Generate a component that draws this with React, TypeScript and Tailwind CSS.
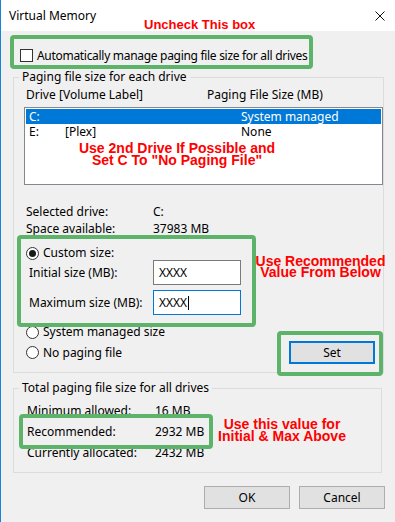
import React from "react";

const font = { fontFamily: '"Noto Sans", "Liberation Sans", sans-serif' };
const redFont = { fontFamily: '"Liberation Sans", Arial, sans-serif' };

const Radio: React.FC<{ checked?: boolean; label: string }> = ({ checked, label }) => (
  <div className="flex items-center gap-[4px]">
    <span className="w-[13px] h-[13px] rounded-full border border-[#333333] bg-white flex items-center justify-center">
      {checked && <span className="w-[7px] h-[7px] rounded-full bg-[#1a1a1a]" />}
    </span>
    <span>{label}</span>
  </div>
);

const SizeInput: React.FC<{ value: string; focused?: boolean }> = ({ value, focused }) => (
  <div
    className={`w-[88px] h-[25px] bg-white border flex items-center pl-[5px] ${
      focused ? "border-[#0078d7]" : "border-[#7a7a7a]"
    }`}
  >
    <span>{value}</span>
    {focused && <span className="w-[1px] h-[14px] bg-black ml-[1px]" />}
  </div>
);

export default function App() {
  return (
    <div
      className="relative w-[395px] h-[522px] bg-[#f0f0f0] overflow-hidden text-[12px] text-black shadow-[inset_1px_0_0_#1883d7]"
      style={font}
    >
      {/* title bar */}
      <div className="h-[31px] bg-white flex items-center justify-between pl-[9px] pr-[10px] shadow-[inset_1px_0_0_#1883d7]">
        <span>Virtual Memory</span>
        <svg width="10" height="10" viewBox="0 0 10 10" className="block">
          <path d="M0.5 0.5 L9.5 9.5 M9.5 0.5 L0.5 9.5" stroke="#111" strokeWidth="1" />
        </svg>
      </div>

      {/* auto manage checkbox */}
      <div className="mt-[18px] pl-[20px] flex items-center gap-[4px] h-[13px]">
        <span className="w-[13px] h-[13px] border border-[#333333] bg-white shrink-0" />
        <span className="tracking-[-0.3px] whitespace-nowrap">Automatically manage paging file size for all drives</span>
      </div>

      {/* paging file per drive */}
      <fieldset className="mt-[7px] ml-[13px] w-[369px] border border-[#dcdcdc] pb-[8px]">
        <legend className="ml-[5px] px-[3px] leading-[16px]">Paging file size for each drive</legend>

        <div className="mt-[2px] h-[16px] leading-[16px] flex pl-[12px]">
          <span className="w-[33px]">Drive</span>
          <span className="w-[148px]">[Volume Label]</span>
          <span>Paging File Size (MB)</span>
        </div>

        <div className="mt-[4px] ml-[10px] w-[359px] h-[78px] border border-[#828790] bg-white p-[1px]">
          <div className="h-[15px] leading-[15px] flex pl-[3px] bg-[#0078d7] text-white">
            <span className="w-[36px]">C:</span>
            <span className="w-[176px]"></span>
            <span>System managed</span>
          </div>
          <div className="h-[15px] leading-[15px] flex pl-[3px]">
            <span className="w-[36px]">E:</span>
            <span className="w-[176px]">[Plex]</span>
            <span>None</span>
          </div>
        </div>

        <div className="mt-[18px] pl-[12px] leading-[17px]">
          <div className="flex">
            <span className="w-[127px]">Selected drive:</span>
            <span>C:</span>
          </div>
          <div className="flex">
            <span className="w-[127px]">Space available:</span>
            <span>37983 MB</span>
          </div>
        </div>

        <div className="mt-[9px] pl-[12px] h-[14px] flex items-center">
          <Radio checked label="Custom size:" />
        </div>

        <div className="pl-[15px] flex items-center h-[25px]">
          <span className="w-[124px]">Initial size (MB):</span>
          <SizeInput value="XXXX" />
        </div>
        <div className="mt-[5px] pl-[15px] flex items-center h-[25px]">
          <span className="w-[124px]">Maximum size (MB):</span>
          <SizeInput value="XXXX" focused />
        </div>

        <div className="mt-[10px] pl-[12px] h-[14px] flex items-center">
          <Radio label="System managed size" />
        </div>

        <div className="mt-[2px] pl-[12px] pr-[8px] h-[23px] flex items-center justify-between">
          <Radio label="No paging file" />
          <button className="w-[86px] h-[23px] bg-[#e1e1e1] border-2 border-[#0078d7] flex items-center justify-center">
            Set
          </button>
        </div>
      </fieldset>

      {/* totals */}
      <fieldset className="mt-[7px] ml-[13px] w-[369px] border border-[#dcdcdc] pb-[9px]">
        <legend className="ml-[5px] px-[3px] leading-[16px]">Total paging file size for all drives</legend>
        <div className="mt-[4px] pl-[13px] leading-[21px]">
          <div className="flex">
            <span className="w-[128px]">Minimum allowed:</span>
            <span>16 MB</span>
          </div>
          <div className="flex">
            <span className="w-[128px]">Recommended:</span>
            <span>2932 MB</span>
          </div>
          <div className="flex">
            <span className="w-[128px]">Currently allocated:</span>
            <span>2432 MB</span>
          </div>
        </div>
      </fieldset>

      <div className="mt-[13px] pr-[10px] flex justify-end gap-[9px]">
        <button className="w-[86px] h-[23px] bg-[#e1e1e1] border border-[#adadad]">OK</button>
        <button className="w-[86px] h-[23px] bg-[#e1e1e1] border border-[#adadad]">Cancel</button>
      </div>

      {/* annotations */}
      <div className="absolute left-[10px] top-[35px] w-[303px] h-[34px] border-4 border-[#5db36a] rounded-[4px]" />
      <div className="absolute left-[17px] top-[235px] w-[239px] h-[92px] border-4 border-[#5db36a] rounded-[4px]" />
      <div className="absolute left-[277px] top-[331px] w-[106px] h-[45px] border-4 border-[#5db36a] rounded-[4px]" />
      <div className="absolute left-[19px] top-[414px] w-[194px] h-[35px] border-4 border-[#5db36a] rounded-[4px]" />

      <div
        className="absolute left-[144px] top-[18px] text-[13px] leading-[13px] font-bold text-[#ff0000] whitespace-nowrap"
        style={redFont}
      >
        Uncheck This box
      </div>
      <div
        className="absolute left-[67px] top-[142px] w-[220px] text-center text-[14px] leading-[12px] font-bold text-[#ff0000] whitespace-nowrap"
        style={redFont}
      >
        <div>Use 2nd Drive If Possible and</div>
        <div>Set C To "No Paging File"</div>
      </div>
      <div
        className="absolute left-[250px] top-[256px] w-[141px] text-center text-[14px] leading-[11px] font-bold text-[#ff0000] whitespace-nowrap"
        style={redFont}
      >
        <div>Use Recommended</div>
        <div>Value From Below</div>
      </div>
      <div
        className="absolute left-[212px] top-[418px] w-[140px] text-center text-[14px] leading-[12px] font-bold text-[#ff0000] whitespace-nowrap"
        style={redFont}
      >
        <div>Use this value for</div>
        <div>Initial &amp; Max Above</div>
      </div>
    </div>
  );
}
